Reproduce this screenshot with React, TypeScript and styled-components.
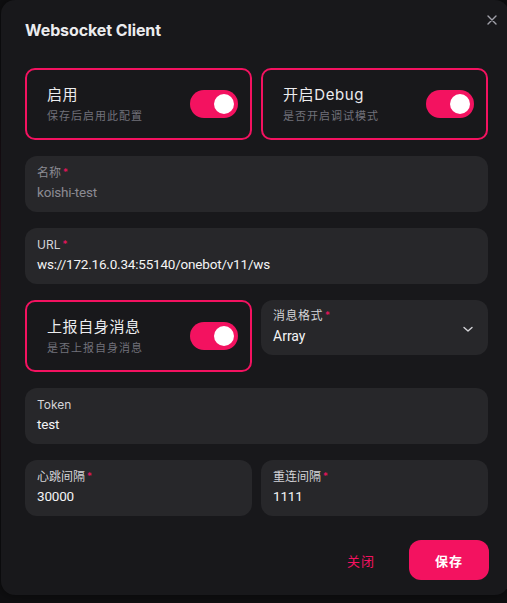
import styled, { createGlobalStyle } from "styled-components";

const GlobalStyle = createGlobalStyle`
  html, body {
    margin: 0;
    padding: 0;
    background: #0f0f11;
    overflow: hidden;
  }
  * {
    box-sizing: border-box;
  }
`

const PINK = '#f31260'

const Switch = () => (
  <Track>
    <Knob/>
  </Track>
)

const ToggleCard = ({ title, desc }: { title: string, desc: string }) => (
  <Card>
    <div className={'text'}>
      <div className={'title'}>{title}</div>
      <div className={'desc'}>{desc}</div>
    </div>
    <Switch/>
  </Card>
)

const Field = ({ label, value, required, muted }: { label: string, value: string, required?: boolean, muted?: boolean }) => (
  <Input $muted={muted}>
    <div className={'label'}>
      {label}
      {required && <span className={'star'}>*</span>}
    </div>
    <div className={'value'}>{value}</div>
  </Input>
)

const App = () => {
  return (
    <Page>
      <GlobalStyle/>
      <Modal>
        <CloseButton>
          <svg width="10" height="10" viewBox="0 0 10 10">
            <path d="M1 1 L9 9 M9 1 L1 9" stroke="#a1a1aa" strokeWidth="1.4" strokeLinecap="round"/>
          </svg>
        </CloseButton>
        <Title>Websocket Client</Title>

        <Form>
          <Row>
            <ToggleCard title={'启用'} desc={'保存后启用此配置'}/>
            <ToggleCard title={'开启Debug'} desc={'是否开启调试模式'}/>
          </Row>

          <Field label={'名称'} value={'koishi-test'} required muted/>
          <Field label={'URL'} value={'ws://172.16.0.34:55140/onebot/v11/ws'} required/>

          <Row $top>
            <ToggleCard title={'上报自身消息'} desc={'是否上报自身消息'}/>
            <Select>
              <div>
                <div className={'label'}>消息格式<span className={'star'}>*</span></div>
                <div className={'value'}>Array</div>
              </div>
              <svg width="12" height="12" viewBox="0 0 12 12">
                <path d="M2 4.5 L6 8 L10 4.5" fill="none" stroke="#d4d4d8" strokeWidth="1.4" strokeLinecap="round" strokeLinejoin="round"/>
              </svg>
            </Select>
          </Row>

          <Field label={'Token'} value={'test'}/>

          <Row>
            <Field label={'心跳间隔'} value={'30000'} required/>
            <Field label={'重连间隔'} value={'1111'} required/>
          </Row>
        </Form>

        <Footer>
          <GhostButton>关闭</GhostButton>
          <PrimaryButton>保存</PrimaryButton>
        </Footer>
      </Modal>
    </Page>
  )
}

const Page = styled.div`
  width: 507px;
  height: 603px;
  padding: 0 0 0 1px;
  font-family: Inter, "Noto Sans CJK SC", sans-serif;
  background: radial-gradient(ellipse 30px 200px at 0 300px, rgba(243, 18, 96, 0.18), transparent);
`

const Modal = styled.div`
  position: relative;
  width: 508px;
  height: 595px;
  background: #18181b;
  border-radius: 14px;
  padding: 20px 19px 0 24px;
  box-shadow: 0 0 12px rgba(0, 0, 0, 0.5);
`

const CloseButton = styled.div`
  position: absolute;
  top: 15px;
  right: 12px;
  width: 10px;
  height: 10px;
  display: flex;
`

const Title = styled.div`
  color: #ececee;
  font-size: 16px;
  font-weight: 700;
  line-height: 20px;
  letter-spacing: -0.1px;
`

const Form = styled.div`
  margin-top: 28px;
  width: 463px;
  display: flex;
  flex-direction: column;
  gap: 16px;
`

const Row = styled.div<{ $top?: boolean }>`
  display: grid;
  grid-template-columns: 1fr 1fr;
  column-gap: 9px;
  align-items: ${p => p.$top ? 'start' : 'stretch'};
`

const Card = styled.div`
  height: 72px;
  border: 2px solid ${PINK};
  border-radius: 10px;
  display: flex;
  align-items: center;
  justify-content: space-between;
  padding: 0 12px 0 20px;

  & > .text {
    display: flex;
    flex-direction: column;
    gap: 4px;

    & > .title {
      color: #ececee;
      font-size: 15px;
      line-height: 20px;
      letter-spacing: 0.6px;
    }

    & > .desc {
      color: #71717a;
      font-size: 11px;
      line-height: 14px;
      letter-spacing: 1px;
    }
  }
`

const Track = styled.div`
  width: 48px;
  height: 28px;
  border-radius: 14px;
  background: ${PINK};
  display: flex;
  align-items: center;
  justify-content: flex-end;
  padding: 0 4px;
`

const Knob = styled.div`
  width: 20px;
  height: 20px;
  border-radius: 50%;
  background: #ffffff;
`

const Input = styled.div<{ $muted?: boolean }>`
  height: 56px;
  background: #27272a;
  border-radius: 12px;
  padding: 9px 12px 0;
  display: flex;
  flex-direction: column;
  gap: 2px;

  & > .label {
    font-size: 12px;
    line-height: 15px;
    color: ${p => p.$muted ? '#8b8b93' : '#d4d4d8'};

    & > .star {
      color: ${PINK};
      margin-left: 2px;
      font-size: 10px;
      vertical-align: top;
    }
  }

  & > .value {
    font-family: Roboto, "Noto Sans CJK SC", sans-serif;
    font-size: 13.5px;
    line-height: 20px;
    letter-spacing: -0.2px;
    color: ${p => p.$muted ? '#8b8b93' : '#f4f4f5'};
  }
`

const Select = styled.div`
  height: 55px;
  background: #27272a;
  border-radius: 12px;
  padding: 8px 14px 0 12px;
  display: flex;
  justify-content: space-between;
  align-items: flex-start;

  & .label {
    font-size: 12px;
    line-height: 15px;
    color: #d4d4d8;
    letter-spacing: 0.5px;

    & > .star {
      color: ${PINK};
      margin-left: 2px;
      font-size: 10px;
      vertical-align: top;
    }
  }

  & .value {
    margin-top: 3px;
    font-family: Roboto, sans-serif;
    font-size: 14px;
    line-height: 20px;
    color: #f4f4f5;
  }

  & > svg {
    margin-top: 15px;
  }
`

const Footer = styled.div`
  margin-top: 24px;
  width: 464px;
  display: flex;
  justify-content: flex-end;
  align-items: center;
  gap: 8px;
`

const GhostButton = styled.button`
  width: 80px;
  height: 40px;
  border: none;
  background: transparent;
  color: ${PINK};
  font-family: inherit;
  font-size: 13px;
  letter-spacing: 1px;
`

const PrimaryButton = styled.button`
  width: 80px;
  height: 40px;
  border: none;
  border-radius: 12px;
  background: ${PINK};
  color: #ffffff;
  font-family: inherit;
  font-size: 13px;
  font-weight: 700;
  letter-spacing: 1px;
`

export default App
